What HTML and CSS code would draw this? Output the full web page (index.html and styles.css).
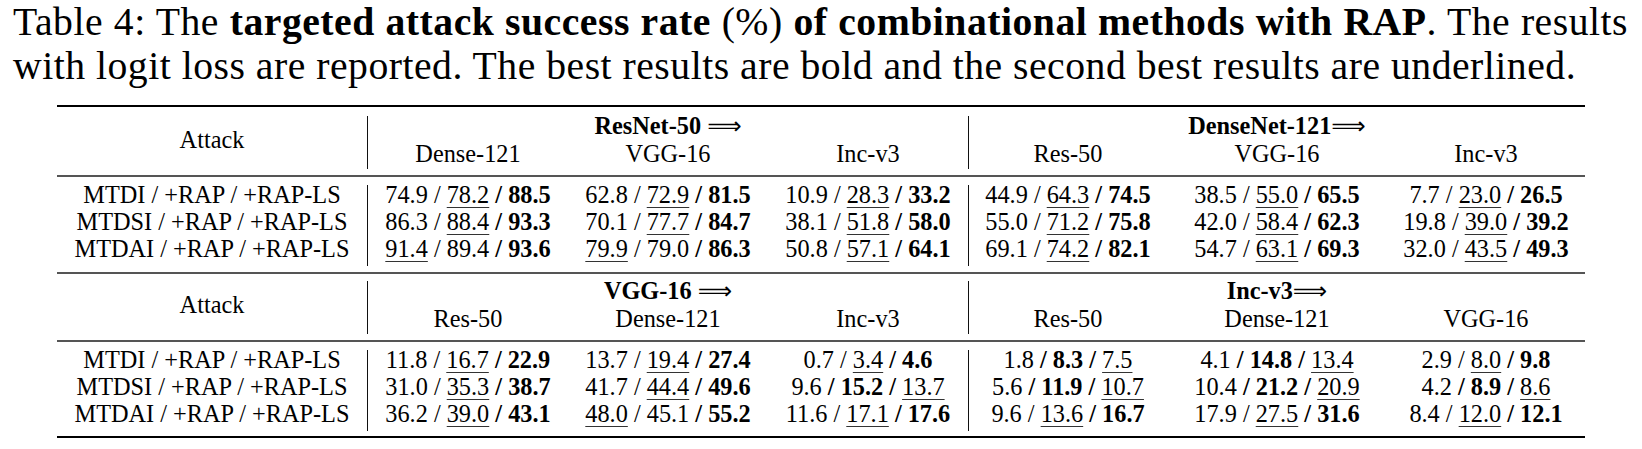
FILE: index.html
```html
<!DOCTYPE html>
<html>
<head>
<meta charset="utf-8">
<link rel="stylesheet" href="styles.css">
</head>
<body>
<p class="caption"><span>Table 4: The</span> <b>targeted attack success rate</b> <span>(%)</span> <b>of combinational methods with RAP</b><span>. The results</span> <span>with logit loss are reported. The best results are bold and the second best results are underlined.</span></p>
<div class="table">
  <div class="rule heavy"></div>
  <div class="block head">
    <div class="attack-col"><div class="attack-label">Attack</div></div>
    <div class="group g1">
      <div class="head-inner">
        <div class="group-title">ResNet-50 <span class="arrow">⟹</span></div>
        <div class="cols"><span>Dense-121</span><span>VGG-16</span><span>Inc-v3</span></div>
      </div>
    </div>
    <div class="group g2">
      <div class="head-inner">
        <div class="group-title">DenseNet-121<span class="arrow">⟹</span></div>
        <div class="cols"><span>Res-50</span><span>VGG-16</span><span>Inc-v3</span></div>
      </div>
    </div>
  </div>
  <div class="rule mid"></div>
  <div class="block data">
    <div class="attack-col"><div class="lines"><div>MTDI / +RAP / +RAP-LS</div><div>MTDSI / +RAP / +RAP-LS</div><div>MTDAI / +RAP / +RAP-LS</div></div></div>
    <div class="group g1">
      <div class="cols lines">
        <span>74.9 / <u>78.2</u> <b>/ 88.5</b></span><span>62.8 / <u>72.9</u> <b>/ 81.5</b></span><span>10.9 / <u>28.3</u> <b>/ 33.2</b></span>
        <span>86.3 / <u>88.4</u> <b>/ 93.3</b></span><span>70.1 / <u>77.7</u> <b>/ 84.7</b></span><span>38.1 / <u>51.8</u> <b>/ 58.0</b></span>
        <span><u>91.4</u> / 89.4 <b>/ 93.6</b></span><span><u>79.9</u> / 79.0 <b>/ 86.3</b></span><span>50.8 / <u>57.1</u> <b>/ 64.1</b></span>
      </div>
    </div>
    <div class="group g2">
      <div class="cols lines">
        <span>44.9 / <u>64.3</u> <b>/ 74.5</b></span><span>38.5 / <u>55.0</u> <b>/ 65.5</b></span><span>7.7 / <u>23.0</u> <b>/ 26.5</b></span>
        <span>55.0 / <u>71.2</u> <b>/ 75.8</b></span><span>42.0 / <u>58.4</u> <b>/ 62.3</b></span><span>19.8 / <u>39.0</u> <b>/ 39.2</b></span>
        <span>69.1 / <u>74.2</u> <b>/ 82.1</b></span><span>54.7 / <u>63.1</u> <b>/ 69.3</b></span><span>32.0 / <u>43.5</u> <b>/ 49.3</b></span>
      </div>
    </div>
  </div>
  <div class="rule mid"></div>
  <div class="block head second">
    <div class="attack-col"><div class="attack-label">Attack</div></div>
    <div class="group g1">
      <div class="head-inner">
        <div class="group-title">VGG-16 <span class="arrow">⟹</span></div>
        <div class="cols"><span>Res-50</span><span>Dense-121</span><span>Inc-v3</span></div>
      </div>
    </div>
    <div class="group g2">
      <div class="head-inner">
        <div class="group-title">Inc-v3<span class="arrow">⟹</span></div>
        <div class="cols"><span>Res-50</span><span>Dense-121</span><span>VGG-16</span></div>
      </div>
    </div>
  </div>
  <div class="rule mid"></div>
  <div class="block data last">
    <div class="attack-col"><div class="lines"><div>MTDI / +RAP / +RAP-LS</div><div>MTDSI / +RAP / +RAP-LS</div><div>MTDAI / +RAP / +RAP-LS</div></div></div>
    <div class="group g1">
      <div class="cols lines">
        <span>11.8 / <u>16.7</u> <b>/ 22.9</b></span><span>13.7 / <u>19.4</u> <b>/ 27.4</b></span><span>0.7 / <u>3.4</u> <b>/ 4.6</b></span>
        <span>31.0 / <u>35.3</u> <b>/ 38.7</b></span><span>41.7 / <u>44.4</u> <b>/ 49.6</b></span><span>9.6 <b>/ 15.2 /</b> <u>13.7</u></span>
        <span>36.2 / <u>39.0</u> <b>/ 43.1</b></span><span><u>48.0</u> / 45.1 <b>/ 55.2</b></span><span>11.6 / <u>17.1</u> <b>/ 17.6</b></span>
      </div>
    </div>
    <div class="group g2">
      <div class="cols lines">
        <span>1.8 <b>/ 8.3 /</b> <u>7.5</u></span><span>4.1 <b>/ 14.8 /</b> <u>13.4</u></span><span>2.9 / <u>8.0</u> <b>/ 9.8</b></span>
        <span>5.6 <b>/ 11.9 /</b> <u>10.7</u></span><span>10.4 <b>/ 21.2 /</b> <u>20.9</u></span><span>4.2 <b>/ 8.9 /</b> <u>8.6</u></span>
        <span>9.6 / <u>13.6</u> <b>/ 16.7</b></span><span>17.9 / <u>27.5</u> <b>/ 31.6</b></span><span>8.4 / <u>12.0</u> <b>/ 12.1</b></span>
      </div>
    </div>
  </div>
  <div class="rule heavy"></div>
</div>
</body>
</html>
```
FILE: styles.css
```css
html, body {
  margin: 0;
  background: #fff;
  color: #000;
  font-family: "Liberation Serif", "Times New Roman", "DejaVu Serif", serif;
}

.caption {
  margin: 0;
  padding-left: 13px;
  width: 1615px;
  font-size: 39.7px;
  letter-spacing: 0.5px;
  line-height: 44px;
  text-align: justify;
}

.table {
  margin: 17px 0 0 57px;
  width: 1528px;
  font-size: 24.3px;
}

.rule {
  height: 2px;
}
.rule.heavy {
  background: #000;
}
.rule.mid {
  background: #555;
}

.block {
  display: flex;
}
.block.head {
  margin: 9px 0 6px;
}
.block.head.second {
  margin-top: 7px;
}
.block.data {
  margin: 8px 0 6px;
}
.block.data.last {
  margin-bottom: 5px;
}

.attack-col {
  width: 310px;
  text-align: center;
  white-space: nowrap;
}
.attack-label {
  padding-top: 10px;
  line-height: 28px;
}

.group {
  border-left: 1px solid #111;
}
.g1 {
  width: 600px;
}
.g2 {
  width: 616px;
}

.head-inner {
  margin-top: -4px;
  padding-bottom: 1px;
  line-height: 28px;
  text-align: center;
}
.group-title {
  font-weight: bold;
  white-space: nowrap;
}
.arrow {
  font-family: "DejaVu Sans", sans-serif;
  font-weight: normal;
  font-size: 24px;
  line-height: 1;
}

.cols {
  display: grid;
}
.g1 .cols {
  grid-template-columns: 200px 200px 200px;
}
.g2 .cols {
  grid-template-columns: 198px 220px 198px;
}
.cols > span {
  text-align: center;
  white-space: nowrap;
}

.lines {
  margin-top: -4px;
  margin-bottom: 4px;
  line-height: 27px;
}

u {
  text-decoration-line: underline;
  text-decoration-thickness: 1px;
  text-underline-offset: 4px;
  text-decoration-color: #333;
}
```
